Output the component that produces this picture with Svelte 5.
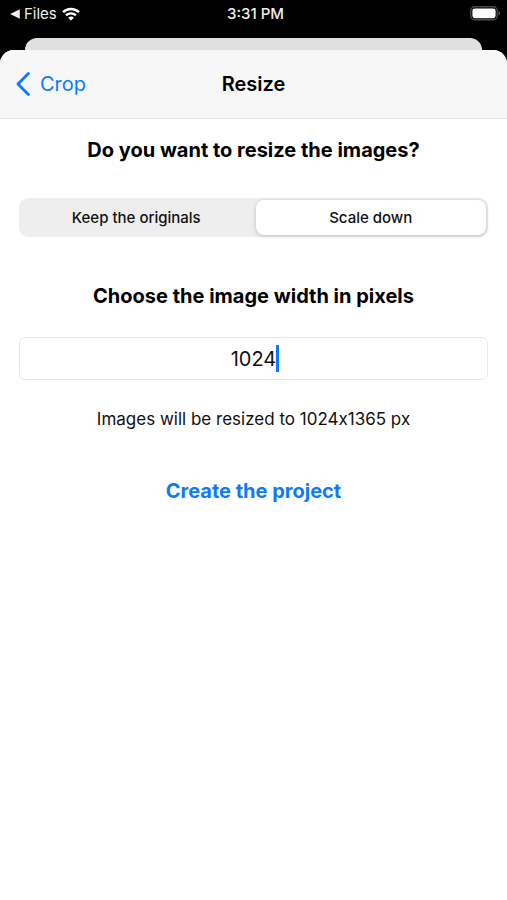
<script lang="ts">
const aspect = 4 / 3;

let mode: 'keep' | 'scale' = $state('scale');
let width = $state('1024');

let height = $derived(Math.floor(Number(width) * aspect) || 0);
</script>

<div class="screen">
  <header class="status">
    <div class="status-left">
      <a class="return" href="#files">
        <svg width="10" height="10" viewBox="0 0 10 10" aria-hidden="true">
          <path d="M0.1 5 9.8 0.3V9.7Z" fill="currentColor" />
        </svg>
        Files
      </a>
      <svg class="wifi" width="18" height="14" viewBox="0 0 18 14" aria-hidden="true">
        <path d="M1 5.2C5.5 0.9 12.5 0.9 17 5.2" fill="none" stroke="currentColor" stroke-width="2.5" />
        <path d="M4 8.4C6.8 5.7 11.2 5.7 14 8.4" fill="none" stroke="currentColor" stroke-width="2.3" />
        <path d="M9 13.6 6.1 10.7C7.6 9.2 10.4 9.2 11.9 10.7Z" fill="currentColor" />
      </svg>
    </div>
    <time>3:31 PM</time>
    <svg class="battery" width="31" height="15" viewBox="0 0 31 15" aria-hidden="true">
      <rect x="0.8" y="0.8" width="26.4" height="13" rx="4" fill="none" stroke="#4b4b4b" stroke-width="1.4" />
      <rect x="2.4" y="2.4" width="23.2" height="9.8" rx="2.4" fill="#fff" />
      <path d="M28.6 5C30.6 5.6 30.6 9 28.6 9.6Z" fill="#5c5c5c" />
    </svg>
  </header>

  <div class="sheet-behind"></div>

  <div class="sheet">
    <nav class="nav">
      <a class="back" href="#crop">
        <svg width="14" height="24" viewBox="0 0 14 24" aria-hidden="true">
          <path d="M12.4 1.5 2 12 12.4 22.5" fill="none" stroke="currentColor" stroke-width="2.8" stroke-linecap="round" stroke-linejoin="round" />
        </svg>
        Crop
      </a>
      <h1>Resize</h1>
    </nav>

    <main>
      <h2 id="resize-question">Do you want to resize the images?</h2>

      <div class="segmented" role="radiogroup" aria-labelledby="resize-question">
        <label class:selected={mode === 'keep'}>
          <input type="radio" name="mode" value="keep" bind:group={mode} />
          Keep the originals
        </label>
        <label class:selected={mode === 'scale'}>
          <input type="radio" name="mode" value="scale" bind:group={mode} />
          Scale down
        </label>
      </div>

      {#if mode === 'scale'}
        <h2><label for="width">Choose the image width in pixels</label></h2>

        <div class="field">
          <input id="width" type="text" inputmode="numeric" bind:value={width} />
          <!-- caret at the end of the centred number -->
          <span class="caret" style="left: calc(50% + {width.length / 2}ch)"></span>
        </div>

        <p>Images will be resized to {width}x{height} px</p>
      {/if}

      <button class="create" type="button">Create the project</button>
    </main>
  </div>
</div>

<style>
  :global(body) {
    background: #000;
  }

  .screen {
    display: flex;
    flex-direction: column;
    min-height: 100vh;
    background: #000;
    color: #000;
    font-family: Inter, "Liberation Sans", sans-serif;
  }

  .status {
    display: grid;
    grid-template-columns: 1fr auto 1fr;
    align-items: center;
    height: 27px;
    margin-bottom: 11px;
    padding: 0 6px 0 10px;
    color: #eee;
    font-size: 15px;
    font-weight: 500;
  }

  .status-left {
    display: flex;
    align-items: center;
    gap: 5px;
  }

  .return {
    display: flex;
    align-items: center;
    gap: 4px;
    color: inherit;
    font-weight: 400;
    text-decoration: none;
  }

  .wifi {
    color: #fff;
  }

  .battery {
    justify-self: end;
  }

  .sheet-behind {
    height: 12px;
    margin: 0 25px;
    border-radius: 12px 12px 0 0;
    background: #e0e0e0;
  }

  .sheet {
    flex: 1;
    overflow: hidden;
    border-radius: 14px 14px 0 0;
    background: #fff;
  }

  .nav {
    display: grid;
    grid-template-columns: 1fr auto 1fr;
    align-items: center;
    height: 68px;
    padding: 0 16px;
    border-bottom: 1px solid #e4e4e4;
    background: #f7f7f7;
  }

  .back {
    display: flex;
    align-items: center;
    gap: 10px;
    color: #0a7aff;
    font-size: 20px;
    text-decoration: none;
  }

  h1,
  h2,
  p {
    margin: 0;
    text-align: center;
  }

  h1 {
    font-size: 20px;
    font-weight: 600;
    line-height: 24px;
  }

  main {
    display: flex;
    flex-direction: column;
    padding: 19px 19px 40px;
  }

  h2 {
    font-size: 20px;
    font-weight: 700;
    line-height: 24px;
  }

  .segmented {
    display: grid;
    grid-template-columns: 1fr 1fr;
    gap: 4px;
    margin: 36px 0 47px;
    padding: 2px;
    border-radius: 9px;
    background: #eee;
  }

  .segmented label {
    border-radius: 8px;
    color: #111;
    font-size: 15px;
    font-weight: 500;
    line-height: 35px;
    text-align: center;
    cursor: pointer;
  }

  .segmented .selected {
    background: #fff;
    box-shadow: 0 1px 4px rgba(0, 0, 0, 0.2);
  }

  .segmented input {
    position: absolute;
    opacity: 0;
    pointer-events: none;
  }

  .field {
    position: relative;
    margin: 29px 0;
    font-size: 20px;
  }

  .field input {
    display: block;
    box-sizing: border-box;
    width: 100%;
    height: 43px;
    padding: 0 12px;
    border: 1px solid #e8e8e8;
    border-radius: 6px;
    outline: none;
    background: #fff;
    color: #111;
    caret-color: transparent;
    font: inherit;
    text-align: center;
  }

  .caret {
    position: absolute;
    top: 8px;
    bottom: 8px;
    width: 3px;
    background: #0a7aff;
    transform: translateX(-100%);
  }

  p {
    color: #111;
    font-size: 17px;
    font-feature-settings: "calt" 0;
    line-height: 20px;
  }

  .create {
    align-self: center;
    margin-top: 50px;
    padding: 0;
    border: 0;
    background: none;
    color: #0a7aff;
    font: 700 20px/24px Inter, "Liberation Sans", sans-serif;
    cursor: pointer;
  }
</style>
